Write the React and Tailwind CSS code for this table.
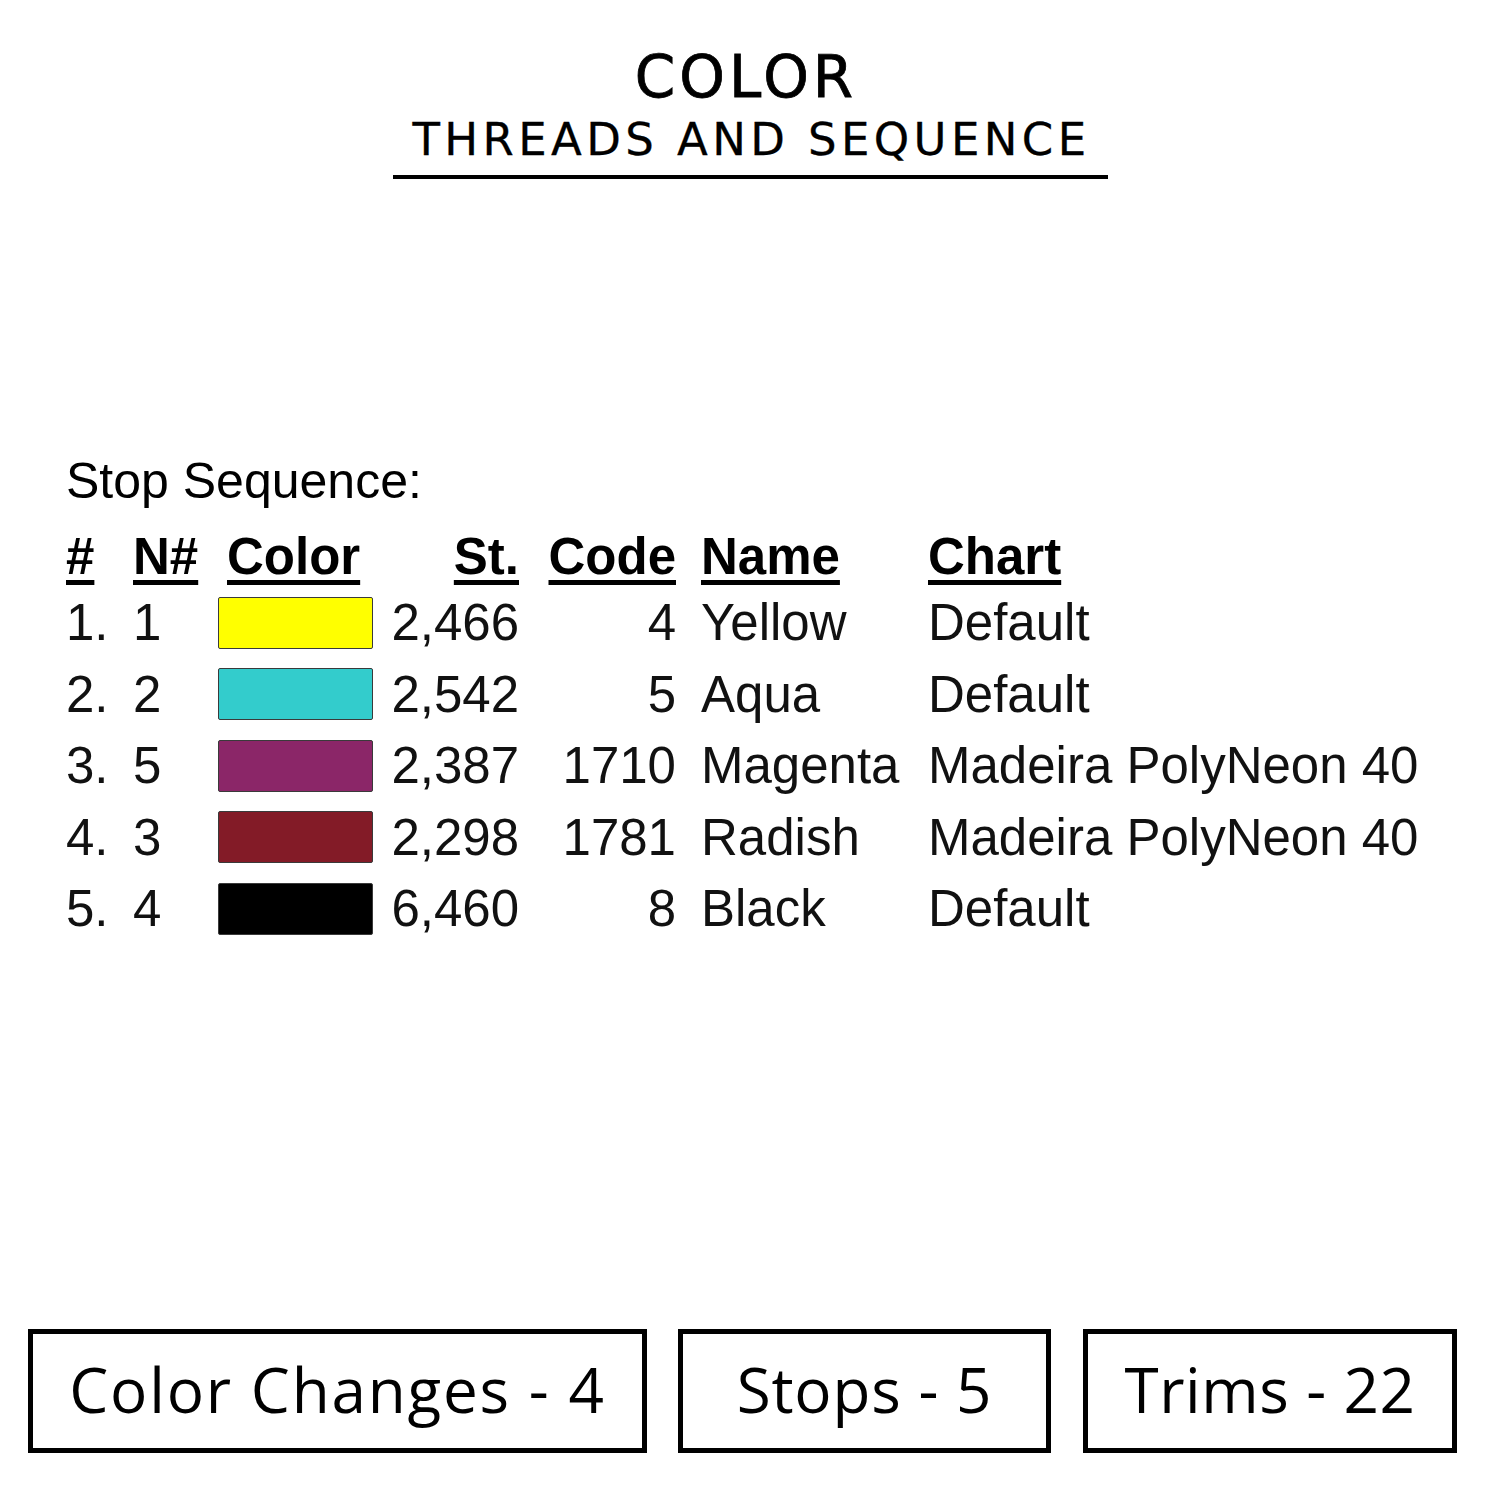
import React from "react";

const rows = [
  { n: "1.", nn: "1", color: "bg-[#ffff00]", st: "2,466", code: "4", name: "Yellow", chart: "Default" },
  { n: "2.", nn: "2", color: "bg-[#33cccc]", st: "2,542", code: "5", name: "Aqua", chart: "Default" },
  { n: "3.", nn: "5", color: "bg-[#8b2668]", st: "2,387", code: "1710", name: "Magenta", chart: "Madeira PolyNeon 40" },
  { n: "4.", nn: "3", color: "bg-[#831b27]", st: "2,298", code: "1781", name: "Radish", chart: "Madeira PolyNeon 40" },
  { n: "5.", nn: "4", color: "bg-[#000000]", st: "6,460", code: "8", name: "Black", chart: "Default" },
];

const hdr = "underline decoration-[5px] underline-offset-[6px] font-bold";

export default function App() {
  return (
    <div className="w-[1500px] h-[1500px] bg-white text-black flex flex-col">
      {/* Title */}
      <div className="flex flex-col items-center pt-[48px] font-['DejaVu_Sans',sans-serif]">
        <div className="text-[58px] leading-none tracking-[4px] h-[58px] pr-[8px] [-webkit-text-stroke:0.8px_black]">COLOR</div>
        <div className="mt-[11px] text-[45px] leading-none tracking-[4.4px] h-[45px] pl-[3px] [-webkit-text-stroke:0.3px_black]">THREADS AND SEQUENCE</div>
        <div className="mt-[13px] h-[4px] w-[715px] bg-black"></div>
      </div>

      {/* Table */}
      <div className="mt-[277px] pl-[66px] font-['Liberation_Sans',Arial,sans-serif] text-[51px] leading-none">
        <div className="h-[50px] text-[50px]">Stop Sequence:</div>
        <div className="mt-[25px] h-[50px] flex items-center">
          <div className="w-[67px]"><span className={hdr}>#</span></div>
          <div className="w-[85px]"><span className={hdr}>N#</span></div>
          <div className="w-[155px] pl-[9px]"><span className={hdr}>Color</span></div>
          <div className="w-[146px] text-right"><span className={hdr}>St.</span></div>
          <div className="w-[157px] text-right"><span className={hdr}>Code</span></div>
          <div className="w-[227px] ml-[25px]"><span className={hdr}>Name</span></div>
          <div><span className={hdr}>Chart</span></div>
        </div>
        <div className="mt-[6px] flex flex-col text-[#111]">
          {rows.map((r) => (
            <div key={r.n} className="h-[71.5px] flex items-center">
              <div className="w-[67px]">{r.n}</div>
              <div className="w-[85px]">{r.nn}</div>
              <div className="w-[155px] flex">
                <div className={`w-[155px] h-[52px] border-[1.5px] border-[#3a3a3a] rounded-[2px] ${r.color}`}></div>
              </div>
              <div className="w-[146px] text-right">{r.st}</div>
              <div className="w-[157px] text-right">{r.code}</div>
              <div className="w-[227px] ml-[25px]">{r.name}</div>
              <div className="whitespace-nowrap">{r.chart}</div>
            </div>
          ))}
        </div>
      </div>

      {/* Bottom boxes */}
      <div className="mt-[384px] pl-[28px] flex font-['Open_Sans',sans-serif] text-[62px] leading-none">
        <div className="w-[619px] h-[124px] border-[5px] border-black flex items-center justify-center pb-[4px] tracking-[1.8px]">
          Color Changes - 4
        </div>
        <div className="ml-[31px] w-[373px] h-[124px] border-[5px] border-black flex items-center justify-center pb-[4px] tracking-[0.8px]">
          Stops - 5
        </div>
        <div className="ml-[32px] w-[374px] h-[124px] border-[5px] border-black flex items-center justify-center pb-[4px] tracking-[0.6px]">
          Trims - 22
        </div>
      </div>
    </div>
  );
}
